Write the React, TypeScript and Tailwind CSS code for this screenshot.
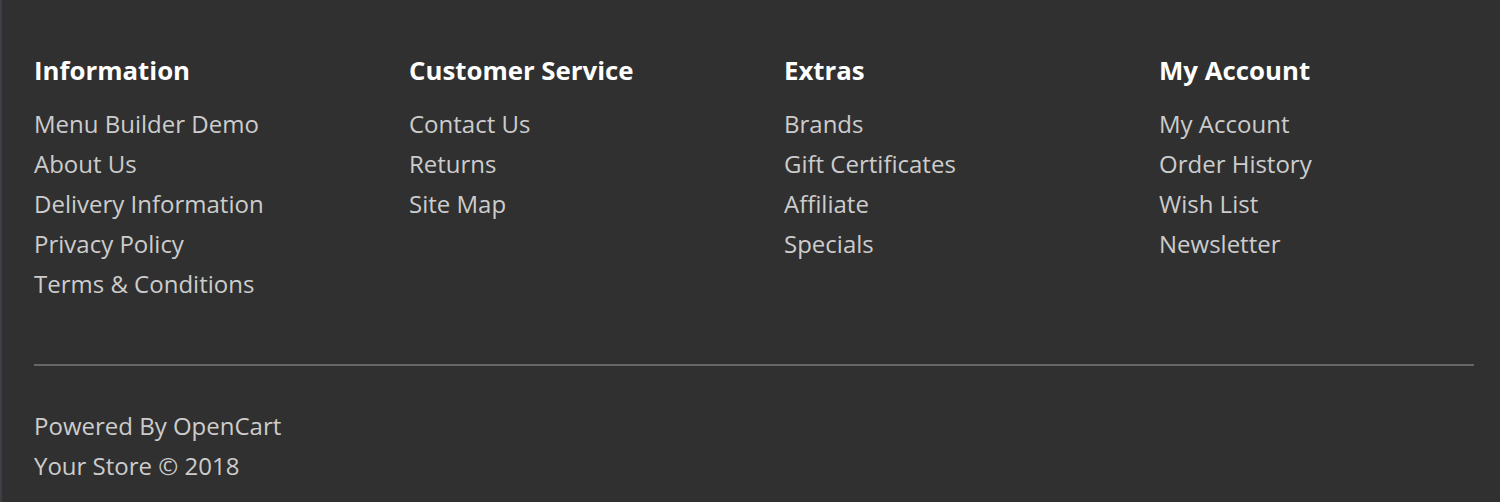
const COLUMNS = [
  {
    title: 'Information',
    links: ['Menu Builder Demo', 'About Us', 'Delivery Information', 'Privacy Policy', 'Terms & Conditions'],
  },
  { title: 'Customer Service', links: ['Contact Us', 'Returns', 'Site Map'] },
  { title: 'Extras', links: ['Brands', 'Gift Certificates', 'Affiliate', 'Specials'] },
  { title: 'My Account', links: ['My Account', 'Order History', 'Wish List', 'Newsletter'] },
];

export default function App() {
  return (
    <footer
      className="w-[1500px] h-[502px] bg-[#303030] border-l-2 border-[#3b3f46] text-[#cccccc]"
      style={{ fontFamily: '"Open Sans", "DejaVu Sans", sans-serif' }}
    >
      <div className="pl-[32px] pr-[26px] pt-[53px]">
        <div className="grid grid-cols-[375px_375px_375px_1fr]">
          {COLUMNS.map((col) => (
            <div key={col.title}>
              <h5 className="text-[25.8px] font-bold text-white leading-[34px] mb-[17px]">{col.title}</h5>
              <ul className="flex flex-col">
                {col.links.map((l) => (
                  <li key={l} className="text-[24px] leading-[40px]">
                    <a href="#" className="hover:text-white">{l}</a>
                  </li>
                ))}
              </ul>
            </div>
          ))}
        </div>
        <hr className="mt-[60px] border-0 h-[2px] bg-[#666666]" />
        <div className="pt-[40px] text-[24px] leading-[40px]">
          <p>
            Powered By <a href="#">OpenCart</a>
          </p>
          <p>Your Store © 2018</p>
        </div>
      </div>
    </footer>
  );
}
